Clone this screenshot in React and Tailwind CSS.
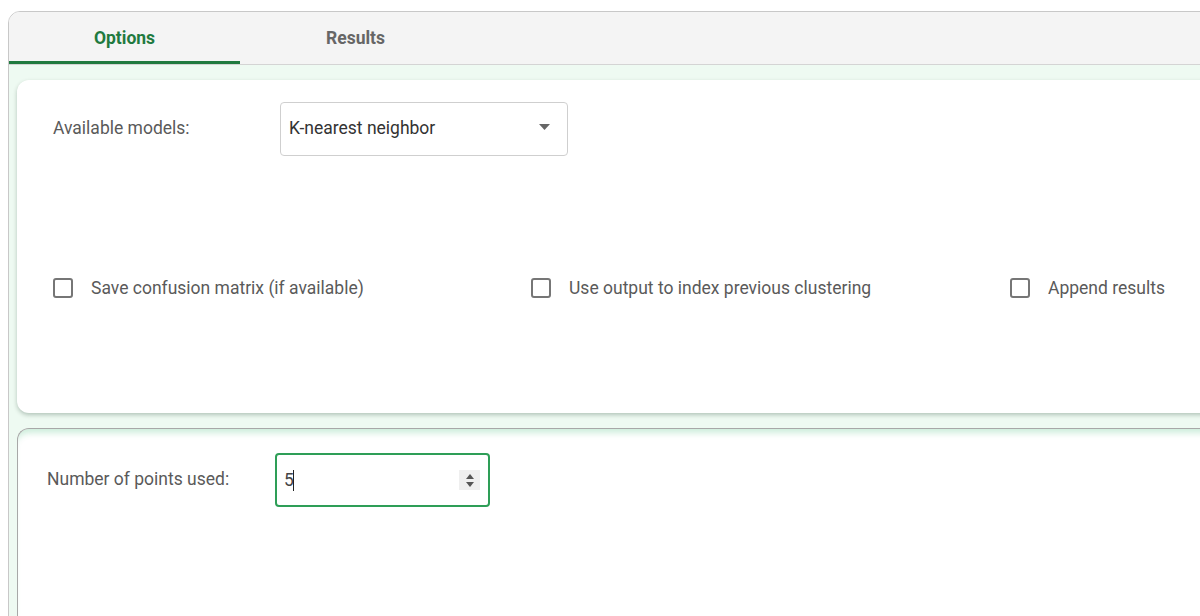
import { useState } from 'react';

function Checkbox({ label }) {
  return (
    <label className="flex items-center gap-[18px] cursor-pointer">
      <span className="w-[20px] h-[20px] rounded-[3px] border-2 border-[#767676] bg-white shrink-0" />
      <span className="text-[17.5px] text-[#5a5a5a]">{label}</span>
    </label>
  );
}

export default function App() {
  const [tab, setTab] = useState('options');
  const [points, setPoints] = useState('5');

  return (
    <div
      className="w-[1200px] h-[616px] overflow-hidden bg-white pl-[8px] pt-[11px]"
      style={{ fontFamily: 'Roboto, "Liberation Sans", sans-serif' }}
    >
      <div className="w-[1500px] h-[640px] border border-[#c8c8c8] rounded-tl-[12px] overflow-hidden flex flex-col">
        {/* Tabs */}
        <div className="h-[53px] shrink-0 bg-[#f4f4f4] border-b border-[#d4d4d4] flex">
          {[
            ['options', 'Options'],
            ['results', 'Results'],
          ].map(([key, name]) => (
            <button
              key={key}
              onClick={() => setTab(key)}
              className={`w-[231px] h-full flex items-center justify-center text-[17.5px] font-bold border-b-[3px] ${
                tab === key ? 'text-[#1f7a3f] border-[#1f7a3f]' : 'text-[#666] border-transparent'
              }`}
            >
              <span className="mt-[4px]">{name}</span>
            </button>
          ))}
        </div>

        {/* Body */}
        <div className="flex-1 bg-[#eefaf2] pl-[8px] pt-[15px] flex flex-col gap-[15px]">
          {/* Model card */}
          <div className="h-[333px] bg-white rounded-l-[12px] shadow-[0_2px_4px_rgba(0,40,20,0.25)] pl-[36px] pt-[22px] flex flex-col">
            <div className="flex items-center">
              <span className="w-[227px] text-[17.5px] text-[#5a5a5a] -mt-[2px]">Available models:</span>
              <div className="w-[288px] h-[54px] border border-[#cfcfcf] rounded-[4px] flex items-center justify-between pl-[8px] pr-[17px]">
                <span className="text-[17.5px] text-[#333] -mt-[1px]">K-nearest neighbor</span>
                <svg width="11" height="6" viewBox="0 0 11 6" className="mb-[4px]">
                  <path d="M0 0h11L5.5 6z" fill="#666" />
                </svg>
              </div>
            </div>
            <div className="mt-[119px] flex">
              <div className="w-[478px]">
                <Checkbox label="Save confusion matrix (if available)" />
              </div>
              <div className="w-[479px]">
                <Checkbox label="Use output to index previous clustering" />
              </div>
              <div className="w-[478px]">
                <Checkbox label="Append results" />
              </div>
            </div>
          </div>

          {/* Parameters card */}
          <div className="flex-1 bg-white rounded-tl-[12px] border-t border-l border-[#a8a8a8] shadow-[inset_0_8px_6px_-4px_rgba(200,235,215,0.9)] pl-[29px] pt-[24px]">
            <div className="flex items-center">
              <span className="w-[228px] text-[17.5px] text-[#5a5a5a] -mt-[1px]">Number of points used:</span>
              <div className="w-[215px] h-[54px] border-2 border-[#2e9e57] rounded-[4px] flex items-center justify-between pl-[7px] pr-[8px]">
                <div className="flex items-center w-[120px]">
                  <input
                    value={points}
                    onChange={(e) => setPoints(e.target.value)}
                    className="w-[10px] text-[17.5px] text-[#444] outline-none bg-transparent"
                  />
                  <span className="w-[1px] h-[21px] bg-[#222] -ml-[1px]" />
                </div>
                <div className="w-[21px] h-[20px] bg-[#efefef] flex flex-col items-center justify-center gap-[3px]">
                  <svg width="8" height="5" viewBox="0 0 8 5">
                    <path d="M4 0l4 5H0z" fill="#555" />
                  </svg>
                  <svg width="8" height="5" viewBox="0 0 8 5">
                    <path d="M0 0h8L4 5z" fill="#555" />
                  </svg>
                </div>
              </div>
            </div>
          </div>
        </div>
      </div>
    </div>
  );
}
